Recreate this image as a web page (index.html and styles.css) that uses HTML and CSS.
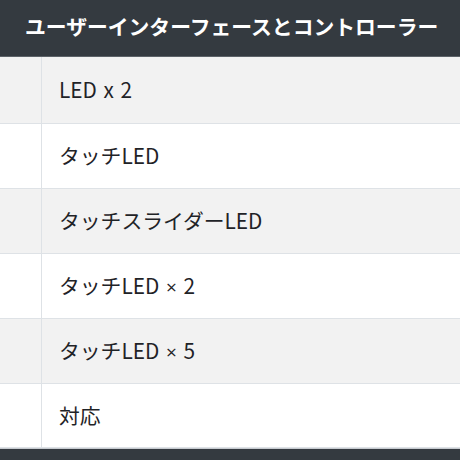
FILE: index.html
```html
<!DOCTYPE html>
<html lang="ja">
<head>
<meta charset="utf-8">
<link rel="stylesheet" href="styles.css">
</head>
<body>
<div class="spec">
  <div class="head">ユーザーインターフェースとコントローラー</div>
  <div class="row alt first"><div class="key"></div><div class="val"><span>LED x 2</span></div></div>
  <div class="row"><div class="key"></div><div class="val"><span>タッチLED</span></div></div>
  <div class="row alt"><div class="key"></div><div class="val"><span>タッチスライダーLED</span></div></div>
  <div class="row"><div class="key"></div><div class="val"><span>タッチLED <span class="times">×</span> 2</span></div></div>
  <div class="row alt"><div class="key"></div><div class="val"><span>タッチLED <span class="times">×</span> 5</span></div></div>
  <div class="row"><div class="key"></div><div class="val"><span>対応</span></div></div>
  <div class="foot"></div>
</div>
</body>
</html>
```
FILE: styles.css
```css
html, body {
  margin: 0;
  padding: 0;
  background: #ffffff;
}
body {
  font-family: "Noto Sans CJK JP", "Noto Sans", sans-serif;
  color: #1f2327;
  overflow: hidden;
}
.spec {
  display: flex;
  flex-direction: column;
  width: 460px;
}
.head {
  height: 57px;
  box-sizing: border-box;
  border-bottom: 1px solid #5c6268;
  background: #343a40;
  color: #ffffff;
  font-weight: 700;
  font-size: 20.8px;
  display: flex;
  align-items: center;
  padding-left: 25px;
  padding-bottom: 5px;
  white-space: nowrap;
}
.row {
  display: grid;
  grid-template-columns: 42px 1fr;
  height: 64.9px;
  box-sizing: border-box;
  border-bottom: 1px solid #dee2e6;
  background: #ffffff;
}
.row.first {
  height: 67px;
}
.row.alt {
  background: #f2f2f2;
}
.key {
  border-right: 1px solid #dee2e6;
}
.val {
  display: flex;
  align-items: center;
  padding-left: 17px;
  padding-bottom: 2px;
  font-size: 20.8px;
  white-space: nowrap;
  word-spacing: 2px;
}
.times {
  font-family: "Open Sans", sans-serif;
  font-size: 19px;
}
.foot {
  height: 12px;
  background: #343a40;
  border-top: 1px solid #c6cacf;
}
```
